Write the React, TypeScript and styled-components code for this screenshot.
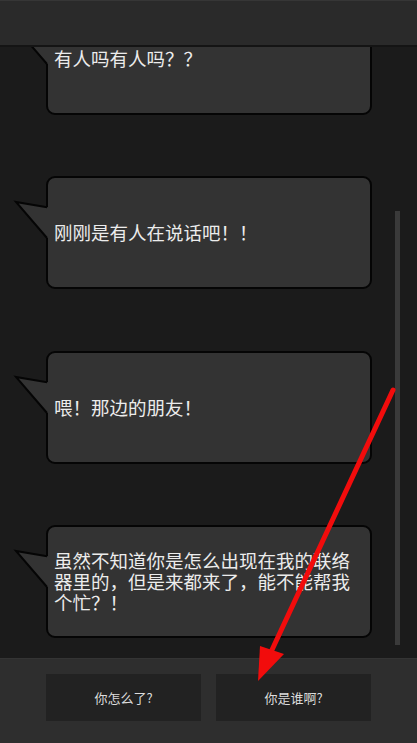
import styled, { createGlobalStyle } from 'styled-components';

type Message = { id: number; text: string };

const messages: Message[] = [
  { id: 1, text: '有人吗有人吗？？' },
  { id: 2, text: '刚刚是有人在说话吧！！' },
  { id: 3, text: '喂！那边的朋友！' },
  { id: 4, text: '虽然不知道你是怎么出现在我的联络器里的，但是来都来了，能不能帮我个忙？！' },
];

const replies = ['你怎么了?', '你是谁啊?'];

const GlobalStyle = createGlobalStyle`
  html, body {
    margin: 0;
    padding: 0;
    background: #1b1b1b;
  }
  #root {
    height: 100vh;
  }
`;

const Screen = styled.div`
  position: relative;
  display: flex;
  flex-direction: column;
  height: 100vh;
  overflow: hidden;
  background: #1b1b1b;
  font-family: 'Noto Sans CJK SC', 'Noto Sans', sans-serif;
`;

const TopBar = styled.header`
  flex: none;
  height: 44px;
  background: #2a2a2a;
  border-top: 1px solid #363636;
  border-bottom: 2px solid #141414;
`;

const ChatViewport = styled.div`
  position: relative;
  flex: 1;
  min-height: 0;
  overflow: hidden;
`;

// list is scrolled a little, so the first bubble sits under the top bar
const MessageList = styled.div`
  display: flex;
  flex-direction: column;
  gap: 61.5px;
  margin-top: -45.5px;
  padding-left: 46px;
`;

const Bubble = styled.div`
  position: relative;
  box-sizing: border-box;
  width: 326px;
  height: 113px;
  display: flex;
  align-items: center;
  padding: 0 13px 0 6px;
  background: #333333;
  border: 2px solid #050505;
  border-radius: 9px;
  color: #ececec;
  font-size: 18.5px;
  line-height: 21px;
`;

const Tail = styled.svg`
  position: absolute;
  left: -34px;
  top: 20px;
  width: 38px;
  height: 44px;
  overflow: visible;
`;

const ScrollThumb = styled.div`
  position: absolute;
  right: 17px;
  top: 164px;
  width: 5px;
  height: 434px;
  background: #3a3a3a;
`;

const ReplyBar = styled.footer`
  flex: none;
  box-sizing: border-box;
  height: 85px;
  display: flex;
  gap: 15px;
  padding: 15px 0 0 46px;
  background: #2e2e2e;
  border-top: 1px solid #343434;
`;

const ReplyButton = styled.button`
  width: 155px;
  height: 47px;
  padding: 0;
  border: none;
  background: #222222;
  color: #dcdcdc;
  font-family: inherit;
  font-size: 13px;
  cursor: pointer;
`;

const Annotation = styled.svg`
  position: absolute;
  left: 0;
  top: 0;
  width: 417px;
  height: 743px;
  pointer-events: none;
`;

function SpeechTail() {
  return (
    <Tail viewBox="0 0 38 44">
      <polygon points="2,4 34,9.3 36,9.3 36,40 33,40" fill="#333333" />
      <polyline points="33,9.2 2,4 33,40" fill="none" stroke="#050505" strokeWidth="2" strokeLinejoin="miter" />
    </Tail>
  );
}

export default function App() {
  return (
    <>
      <GlobalStyle />
      <Screen>
        <TopBar />
        <ChatViewport>
          <MessageList>
            {messages.map((m) => (
              <Bubble key={m.id}>
                <SpeechTail />
                <span>{m.text}</span>
              </Bubble>
            ))}
          </MessageList>
          <ScrollThumb />
        </ChatViewport>
        <ReplyBar>
          {replies.map((r) => (
            <ReplyButton key={r}>{r}</ReplyButton>
          ))}
        </ReplyBar>
        <Annotation viewBox="0 0 417 743">
          <line x1="393" y1="390" x2="271" y2="652" stroke="#f20c0c" strokeWidth="5" strokeLinecap="round" />
          <polygon points="258,681 260,646 284,654" fill="#f20c0c" />
        </Annotation>
      </Screen>
    </>
  );
}
